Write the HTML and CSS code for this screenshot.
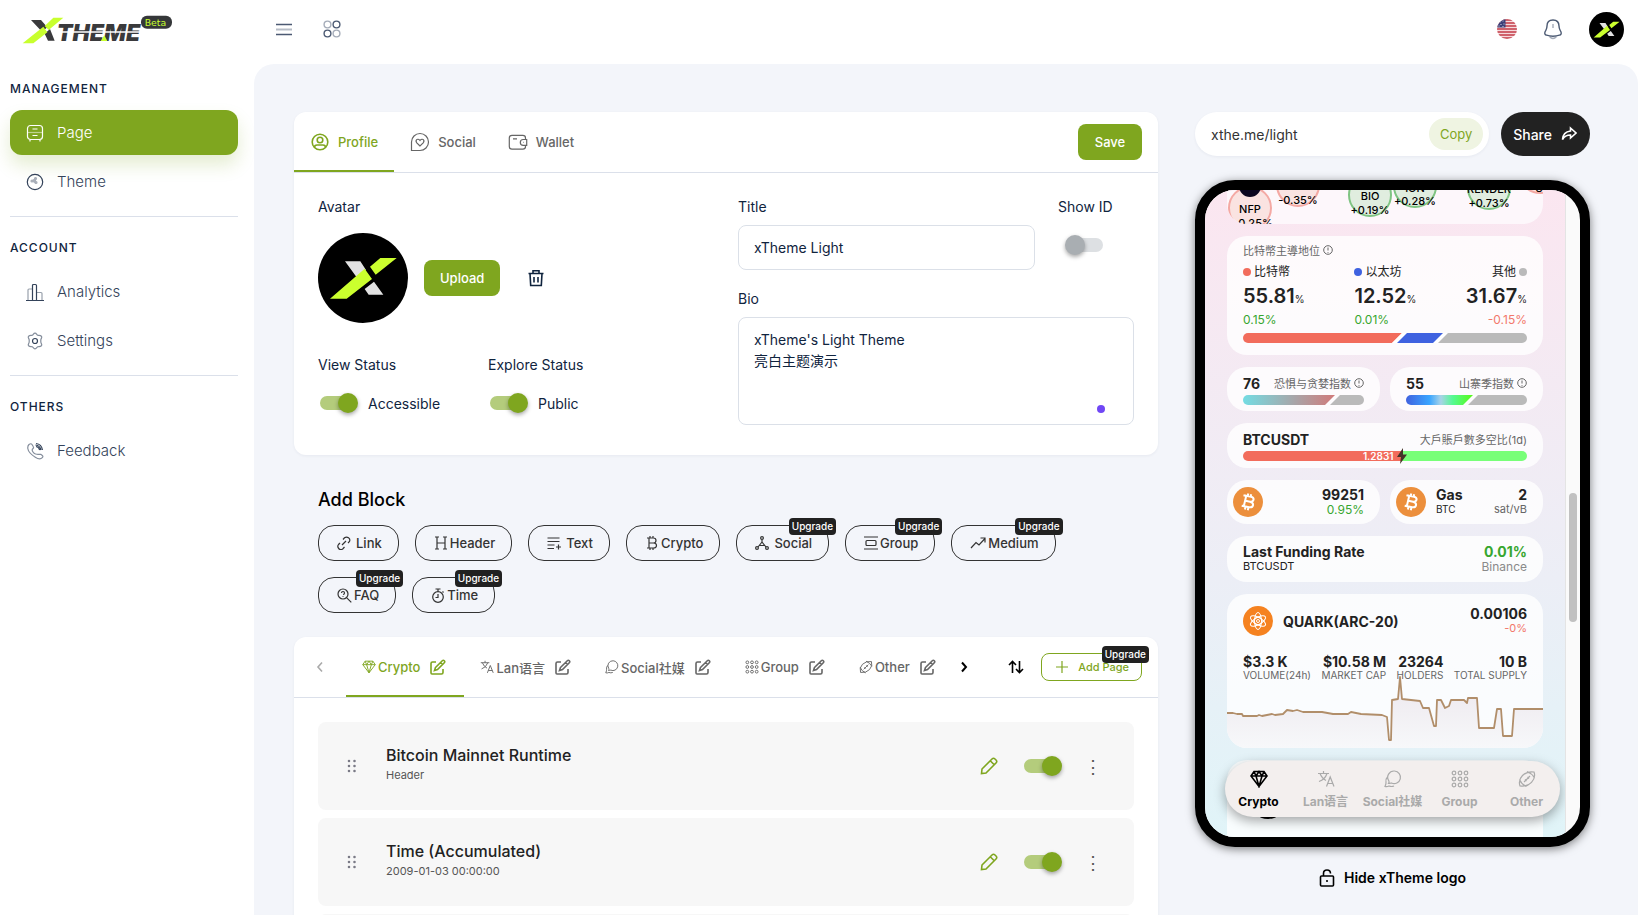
FILE: index.html
```html
<!DOCTYPE html>
<html lang="en">
<head>
	<meta charset="utf-8">
	<title>xTheme</title>
	<link rel="stylesheet" href="styles.css">
</head>
<body>
	<svg class="sprite" aria-hidden="true">
		<symbol id="xlogo" viewBox="84 399 270 270">
			<circle cx="219" cy="534" r="135" fill="#000"/>
			<path d="M165 484h46l17 26-27 23zM224 567l28-22 28 39h-44z" fill="#e2e2e2"/>
			<path d="M120 596l104-90 22 31-76 59zM240 500l31-26h49l-63 50z" fill="#cbff2e"/>
		</symbol>
		<symbol id="edit" viewBox="0 0 16 16">
			<path d="M6 3H2.500Q1 3 1 4.500V14q0 1 1 1h9.500q1.500 0 1.500-1.500V10M5.500 8.500l6.800-6.800q1-1 2 0t0 2L7.500 10.500l-3 1zM10.500 3.500l2 2"/>
		</symbol>
		<symbol id="diamond" viewBox="0 0 18 18">
			<path d="M4 1.500h10l3 4.500-8 10.500L1 6zM1 6h16M4 1.500L6 6l3 10.500L12 6l2-4.500M6 6l3-4.500L12 6"/>
		</symbol>
		<symbol id="lang" viewBox="0 0 18 18">
			<path d="M1 3.500h11M6.500 1v2.500M3 3.500q2 5 6 7M10 3.500q-2 6-8 8M9.500 16.500l3.700-9.500L17 16.500M10.800 13.500h5"/>
		</symbol>
		<symbol id="chat" viewBox="0 0 18 18">
			<path d="M10.500 1a6.300 6.300 0 1 1-3 12Q5 13.500 4.500 13.500q1-1.500.3-2.700A6.300 6.300 0 0 1 10.500 1zM3.500 7q-2 2-1.500 5 .3 1.500-1 4.500 2 .5 4-.5 2.500 1 5 0"/>
		</symbol>
		<symbol id="dots" viewBox="0 0 18 18">
			<g id="dotrow"><circle cx="3" cy="3" r="1.800"/><circle cx="9" cy="3" r="1.800"/><circle cx="15" cy="3" r="1.800"/></g>
			<use href="#dotrow" y="6"/><use href="#dotrow" y="12"/>
		</symbol>
		<symbol id="ball" viewBox="0 0 18 18">
			<path d="M2 16Q0 10 4.500 5.500T16 2q2 5.500-2.500 10.300T2 16zM9 1.500q5 2 7.500 6.500M1.500 9.500q2 5 7 7M6 12l6-6M7 9.500L8.500 11M9.500 7L11 8.500"/>
		</symbol>
		<symbol id="pencil" viewBox="0 0 18 18">
			<path d="M2 12L12 2q1.500-1.500 3 0l1 1q1.500 1.500 0 3L6 16l-4.500.5zM10.500 4l3.500 3.500"/>
		</symbol>
		<symbol id="drag" viewBox="0 0 10 14">
			<path d="M2 2h0M7.500 2h0M2 7h0M7.500 7h0M2 12h0M7.500 12h0"/>
		</symbol>
		<symbol id="info" viewBox="0 0 10 10">
			<circle cx="5" cy="5" r="4.300"/><path d="M5 2.500v3M5 7v.8"/>
		</symbol>
		<symbol id="bitcoin" viewBox="0 0 30 30">
			<circle cx="15" cy="15" r="15" fill="#ec8f3c"/>
			<path d="M12 8.500l6 1.200q3 .8 2.500 3t-3.500 2l-4.500-1M17 14.700q3.500 1 3 3.500t-4 2l-6.500-1.400M13.200 9l-2.400 10.300M10.500 8.200l2 .5M8.700 18.700l2.300.5M15.300 6.500l-.7 3M18.200 7.200l-.7 3M12.600 19.500l-.7 3M15.500 20.200l-.7 3" fill="none" stroke="#fff" stroke-width="2"/>
		</symbol>
	</svg>

	<aside class="sidebar">
		<a class="logo" href="#" aria-label="xTheme">
			<svg viewBox="66 46 456 87" width="152" height="29">
				<path d="M93 61h30l19 22-16 13zM134 102l16-14 14 35h-20z" fill="#3a3a3c"/>
				<path d="M68 131l62-50 12 17-42 33zM134 79l26-25h30l-44 37z" fill="#c8ff2e"/>
				<text x="170" y="125" class="logo-text">THEME</text>
				<path d="M176 97h244" stroke="#fff" stroke-width="4"/>
				<path d="M313 107l9 17h-20z" fill="#c8ff2e"/>
				<rect x="423" y="48" width="93" height="39" rx="18" fill="#353739"/>
				<text x="434" y="78" class="beta-text">Beta</text>
			</svg>
		</a>
		<nav>
			<h2>MANAGEMENT</h2>
			<a class="nav-item active" href="#">
				<svg class="icon" width="18" height="18" viewBox="0 0 18 18"><rect x="1.500" y="1.500" width="15" height="14" rx="3"/><path d="M6.500 5h5M6.500 11.500h5M4 16v1.500M14 16v1.500"/><path d="M1.500 8.500h15" opacity=".5"/></svg>
				Page
			</a>
			<a class="nav-item" href="#">
				<svg class="icon" width="18" height="18" viewBox="0 0 18 18"><circle cx="9" cy="9" r="7.700"/><g fill="#a9afb9" stroke="#a9afb9"><circle cx="6" cy="8" r="1"/><circle cx="9.500" cy="5.500" r="1"/><circle cx="10" cy="9.500" r="1"/><path d="M6 8l3.500-2.500V9.500z"/></g></svg>
				Theme
			</a>
			<hr>
			<h2>ACCOUNT</h2>
			<a class="nav-item" href="#">
				<svg class="icon" width="18" height="18" viewBox="0 0 18 18"><path d="M0 17.500h18M6.500 17V2.500q0-1 1-1h2q1 0 1 1V17"/><path d="M2 17V7q0-1 1-1h3M11 9.500h4q1 0 1 1V17" opacity=".5"/></svg>
				Analytics
			</a>
			<a class="nav-item" href="#">
				<svg class="icon" width="18" height="18" viewBox="0 0 18 18"><circle cx="9" cy="9" r="2.500"/><path opacity=".6" d="M9 1.200c1.500 0 1.700 1.500 2.700 2s2.400-.2 3.700 1-.6 2.300-.6 3.800v2c0 1.500 1.900 2.600.6 3.800s-2.700.5-3.700 1-1.200 2-2.700 2-1.700-1.500-2.700-2-2.400.2-3.700-1 .6-2.300.6-3.800V8c0-1.500-1.900-2.600-.6-3.800s2.700-.5 3.700-1 1.200-2 2.700-2z"/></svg>
				Settings
			</a>
			<hr>
			<h2>OTHERS</h2>
			<a class="nav-item" href="#">
				<svg class="icon" width="18" height="18" viewBox="0 0 18 18"><path opacity=".6" d="M3 2.500q2-1.500 3 0l1.200 2q.8 1.200-.4 2.300t0 3 2.700 2.200 2.500.3 2.800 0l1.500 1.200q1.200 1 0 2.200-2.500 2.500-7-.5Q2.500 11 1.800 6.500 1.500 4 3 2.500z"/><path d="M10 1.500q5.500.5 6.500 6.500M10 4.500q3 .5 3.700 3.500M9.500 3q4.500.5 5.500 5"/></svg>
				Feedback
			</a>
		</nav>
	</aside>

	<div class="page">
		<header class="topbar">
			<button class="icon-button" aria-label="Toggle menu">
				<svg width="18" height="18" viewBox="0 0 18 18" fill="none" stroke="#4c5a73"><path d="M1 4.500h16M1 14.500h16" stroke-width="1.300"/><path d="M1 9.500h16" opacity=".4" stroke-width="2"/></svg>
			</button>
			<button class="icon-button" aria-label="Apps">
				<svg width="18" height="18" viewBox="0 0 18 18" fill="none" stroke="#4c5a73" stroke-width="1.400"><circle cx="4.500" cy="4.500" r="3.400" opacity=".5"/><circle cx="13.500" cy="4.500" r="3.400"/><circle cx="4.500" cy="13.500" r="3.400"/><circle cx="13.500" cy="13.500" r="3.400" opacity=".5"/></svg>
			</button>
			<div class="topbar-right">
				<button class="icon-button" aria-label="Language">
					<svg width="20" height="20" viewBox="0 0 20 20">
						<clipPath id="round"><circle cx="10" cy="10" r="10"/></clipPath>
						<g clip-path="url(#round)"><path fill="#f6d9dc" d="M0 0h20v20H0z"/><path stroke="#c23a45" stroke-width="1.400" d="M0 1h20M0 4h20M0 7h20M0 10h20M0 13h20M0 16h20M0 19h20"/><path fill="#3c3f78" d="M0 0h8.500v8.500H0z"/><path d="M3 3h0M6 2h0M4 5.500h0M7 5h0M2 7h0M6 7.500h0" stroke="#fff" stroke-linecap="round"/></g>
					</svg>
				</button>
				<button class="icon-button" aria-label="Notifications">
					<svg width="20" height="22" viewBox="0 0 20 22" fill="none" stroke="#4c5a73" stroke-width="1.400"><path d="M10 2C6 2 4 4.500 4 8c0 3-.8 3.500-2 6-.7 1.700.2 2.800 1.500 3.200 4 1.200 9 1.200 13 0 1.300-.4 2.200-1.500 1.500-3.200-1.200-2.500-2-3-2-6 0-3.500-2-6-6-6z"/><path d="M10 6v4M6.500 18.500q3.500 4 7 0" opacity=".5"/></svg>
				</button>
				<button class="icon-button" aria-label="Account"><svg width="35" height="35"><use href="#xlogo"/></svg></button>
			</div>
		</header>

		<main class="content">
			<div class="editor">
				<section class="card">
					<div class="tabs">
						<button class="tab active"><svg class="icon thick" width="20" height="20" viewBox="0 0 20 20"><circle cx="10" cy="10" r="7.800"/><circle cx="10" cy="8" r="2.800"/><path d="M4.500 15.500q0-2.500 2.500-2.500h6q2.500 0 2.500 2.500"/></svg>Profile</button>
						<button class="tab"><svg class="icon" width="20" height="20" viewBox="0 0 20 20"><path d="M1.500 18.500V10A8.500 8.500 0 1 1 10 18.500zM10 14l-3.200-3.200q-1.500-2 0-3.200 1.700-1 3.200.9 1.500-1.900 3.200-.9 1.500 1.200 0 3.200z"/></svg>Social</button>
						<button class="tab"><svg class="icon" width="20" height="20" viewBox="0 0 20 20"><path d="M17.500 7V6q0-2.700-2.700-2.700H4Q1.300 3.300 1.300 6v8.500q0 2.700 2.700 2.700h10.800q2.700 0 2.700-2.700V13.500M5 6.800h4M18.700 7.500h-3.500a2.900 2.900 0 0 0 0 5.800h3.500zM15 10.300h.5"/></svg>Wallet</button>
						<button class="btn save">Save</button>
					</div>
					<form class="profile">
						<div class="profile-left">
							<span class="label">Avatar</span>
							<div class="avatar-row">
								<svg width="90" height="90"><use href="#xlogo"/></svg>
								<button type="button" class="btn upload">Upload</button>
								<button type="button" class="icon-button" aria-label="Delete avatar">
									<svg class="icon thick" width="18" height="18" viewBox="0 0 18 18"><path d="M1.500 4.500h15M6 4V1.700h6V4M3 4.500l.7 12h10.600l.7-12M7 8v5.500M11 8v5.500"/></svg>
								</button>
							</div>
							<div class="status-row">
								<div>
									<span class="label">View Status</span>
									<label class="toggle"><input type="checkbox" class="switch" checked>Accessible</label>
								</div>
								<div>
									<span class="label">Explore Status</span>
									<label class="toggle"><input type="checkbox" class="switch" checked>Public</label>
								</div>
							</div>
						</div>
						<div class="profile-right">
							<div class="title-row">
								<div class="title-field">
									<label class="label" for="title">Title</label>
									<input type="text" id="title" class="field" value="xTheme Light">
								</div>
								<div class="show-id">
									<label class="label" for="showid">Show ID</label>
									<input type="checkbox" class="switch" id="showid">
								</div>
							</div>
							<label class="label" for="bio">Bio</label>
							<div class="bio">
								<textarea id="bio" class="field">xTheme's Light Theme
亮白主题演示</textarea>
								<span class="bio-dot"></span>
							</div>
						</div>
					</form>
				</section>

				<section class="blocks">
					<h3>Add Block</h3>
					<div class="block-list">
						<button class="block wide"><svg class="icon" width="14" height="14" viewBox="0 0 14 14"><path d="M6 3.500l1.500-1.700q2-1.500 4 0t1 3.700L11 7M3 7L1.500 8.500q-1.500 2 .2 4t4 .5L7.500 11M5 9l4-4"/></svg>Link</button>
						<button class="block"><svg class="icon" width="14" height="14" viewBox="0 0 14 14"><path d="M1 1h4M3 1v12M1 13h4M9 1h4M11 1v12M9 13h4M3 7h8"/></svg>Header</button>
						<button class="block wide"><svg class="icon" width="14" height="14" viewBox="0 0 14 14"><path d="M.5 2h12M.5 5.500h12M.5 9h7M.5 12.500H7M11.500 8.500v5M9 11h5"/></svg>Text</button>
						<button class="block"><svg class="icon" width="14" height="14" viewBox="0 0 14 14"><path d="M2 2h6.500q2.500 0 2.500 2.500T8.500 7H4M8.500 7Q11.500 7 11.500 9.500T8.500 12H2M4 2v10M5 0v2M8 0v2M5 12v2M8 12v2"/></svg>Crypto</button>
						<button class="block wide"><svg class="icon" width="14" height="14" viewBox="0 0 14 14"><circle cx="7" cy="2" r="1.400"/><circle cx="2" cy="12" r="1.400"/><circle cx="12" cy="12" r="1.400"/><path d="M7 3.500v3M7 6L3 11M7 6l4 5M4.500 9.500h5"/></svg>Social<span class="badge">Upgrade</span></button>
						<button class="block"><svg class="icon" width="14" height="14" viewBox="0 0 14 14"><path d="M0 1h14M0 13h14"/><rect x="2" y="4.500" width="10" height="5" rx="1"/></svg>Group<span class="badge">Upgrade</span></button>
						<button class="block"><svg class="icon" width="16" height="14" viewBox="0 0 16 14"><path d="M1 12l5-5.500L9 9l6-6.500M10.500 2H15v4.500"/></svg>Medium<span class="badge">Upgrade</span></button>
						<button class="block"><svg class="icon" width="15" height="15" viewBox="0 0 15 15"><circle cx="6" cy="6" r="5"/><path d="M9.800 9.800l4.500 4.500M4.500 5q0-1.500 1.500-1.500T7.500 5 6 6.500M6 8v.8"/></svg>FAQ<span class="badge">Upgrade</span></button>
						<button class="block"><svg class="icon" width="14" height="15" viewBox="0 0 14 15"><circle cx="7" cy="9" r="5.300"/><path d="M4.500 1h5M7 1v2.500M11.500 3.500l1 1M7 6v3.500H4.500"/></svg>Time<span class="badge">Upgrade</span></button>
					</div>
				</section>

				<section class="card">
					<div class="tabs pages">
						<button class="arrow" aria-label="Previous" disabled><svg class="icon thick" width="12" height="12" viewBox="0 0 12 12"><path d="M8 1.500L4 6l4 4.500"/></svg></button>
						<button class="tab active"><svg class="icon" width="14" height="14"><use href="#diamond"/></svg>Crypto<svg class="icon edit" width="16" height="16"><use href="#edit"/></svg></button>
						<button class="tab"><svg class="icon" width="14" height="14"><use href="#lang"/></svg>Lan语言<svg class="icon edit" width="16" height="16"><use href="#edit"/></svg></button>
						<button class="tab"><svg class="icon" width="14" height="14"><use href="#chat"/></svg>Social社媒<svg class="icon edit" width="16" height="16"><use href="#edit"/></svg></button>
						<button class="tab"><svg class="icon" width="14" height="14"><use href="#dots"/></svg>Group<svg class="icon edit" width="16" height="16"><use href="#edit"/></svg></button>
						<button class="tab"><svg class="icon" width="14" height="14"><use href="#ball"/></svg>Other<svg class="icon edit" width="16" height="16"><use href="#edit"/></svg></button>
						<button class="arrow next-arrow" aria-label="Next"><svg class="icon bold" width="12" height="12" viewBox="0 0 12 12"><path d="M4 1.500L8 6l-4 4.500"/></svg></button>
						<button class="arrow sort" aria-label="Sort"><svg class="icon thick" width="16" height="14" viewBox="0 0 16 14"><path d="M4.500 13V1.500M1 5l3.500-3.500L8 5M11.500 1v11.500M8 9l3.500 3.500L15 9"/></svg></button>
						<button class="add-page"><svg class="icon" width="12" height="12" viewBox="0 0 12 12"><path d="M6 0v12M0 6h12"/></svg>Add Page<span class="badge">Upgrade</span></button>
					</div>
					<ul class="rows">
						<li class="row">
							<button class="icon-button drag" aria-label="Move"><svg width="10" height="14"><use href="#drag"/></svg></button>
							<div class="row-text"><strong>Bitcoin Mainnet Runtime</strong><span>Header</span></div>
							<button class="icon-button pencil" aria-label="Edit"><svg class="icon thick" width="18" height="18"><use href="#pencil"/></svg></button>
							<input type="checkbox" class="switch" checked aria-label="Show block">
							<button class="icon-button more" aria-label="More">⋮</button>
						</li>
						<li class="row">
							<button class="icon-button drag" aria-label="Move"><svg width="10" height="14"><use href="#drag"/></svg></button>
							<div class="row-text"><strong>Time (Accumulated)</strong><span>2009-01-03 00:00:00</span></div>
							<button class="icon-button pencil" aria-label="Edit"><svg class="icon thick" width="18" height="18"><use href="#pencil"/></svg></button>
							<input type="checkbox" class="switch" checked aria-label="Show block">
							<button class="icon-button more" aria-label="More">⋮</button>
						</li>
						<li class="row"></li>
					</ul>
				</section>
			</div>

			<div class="preview">
				<div class="share-row">
					<div class="url-box">
						<input type="text" value="xthe.me/light" aria-label="Page address" readonly>
						<button class="copy">Copy</button>
					</div>
					<button class="share">Share <svg class="icon thick" width="16" height="16" viewBox="0 0 16 16"><path d="M9.500 2l5.500 5-5.500 5V9Q4 9 1.500 13.500 2 6 9.500 5z"/></svg></button>
				</div>

				<div class="phone">
					<div class="screen">
						<svg class="bubbles" viewBox="0 0 316 34">
							<g class="down"><circle cx="23" cy="18" r="21"/><circle cx="71" cy="-5" r="21"/><circle cx="313" cy="-18" r="21"/></g>
							<g class="up"><circle cx="143" cy="5" r="21"/><circle cx="188" cy="-4" r="21"/><circle cx="262" cy="-2" r="21"/></g>
							<circle cx="23" cy="-4" r="11" fill="#0b0720"/>
							<text x="23" y="23">NFP</text><text x="26" y="37">-0.25%</text>
							<text x="71" y="14">-0.35%</text>
							<text x="143" y="10">BIO</text><text x="143" y="24">+0.19%</text>
							<text x="188" y="2">ION</text><text x="188" y="15">+0.28%</text>
							<text x="262" y="3">RENDER</text><text x="262" y="17">+0.73%</text>
							<text x="312" y="2">S</text>
						</svg>

						<div class="widget dominance">
							<p class="muted">比特幣主導地位 <svg class="icon" width="10" height="10"><use href="#info"/></svg></p>
							<div class="coins">
								<div>
									<p class="coin"><i class="dot red"></i>比特幣</p>
									<p class="value">55.81<small>%</small></p>
									<p class="green">0.15%</p>
								</div>
								<div>
									<p class="coin"><i class="dot blue"></i>以太坊</p>
									<p class="value">12.52<small>%</small></p>
									<p class="green">0.01%</p>
								</div>
								<div class="right">
									<p class="coin">其他<i class="dot gray"></i></p>
									<p class="value">31.67<small>%</small></p>
									<p class="pink">-0.15%</p>
								</div>
							</div>
							<svg class="bar" viewBox="0 0 284 10"><path fill="#f26c5c" d="M0 0h159l-10 10H0z"/><path fill="#fff" d="M159 0h46l-10 10h-46z"/><path fill="#3f62e0" d="M164 0h36l-10 10h-36z"/><path fill="#bababa" d="M205 0h79v10h-89z"/></svg>
						</div>

						<div class="pair">
							<div class="widget index">
								<p><b>76</b><span class="muted">恐惧与贪婪指数 <svg class="icon" width="10" height="10"><use href="#info"/></svg></span></p>
								<svg class="bar" viewBox="0 0 121 10"><linearGradient id="fear"><stop stop-color="#74dce3"/><stop offset="1" stop-color="#d17a7a"/></linearGradient><path fill="url(#fear)" d="M0 0h92l-10 10H0z"/><path fill="#bababa" d="M97 0h24v10H87z"/></svg>
							</div>
							<div class="widget index">
								<p><b>55</b><span class="muted">山寨季指数 <svg class="icon" width="10" height="10"><use href="#info"/></svg></span></p>
								<svg class="bar" viewBox="0 0 121 10"><linearGradient id="alt"><stop stop-color="#4062df"/><stop offset=".35" stop-color="#3aa5ff"/><stop offset=".52" stop-color="#a8d3e8"/><stop offset=".7" stop-color="#55f991"/><stop offset="1" stop-color="#57fb13"/></linearGradient><path fill="url(#alt)" d="M0 0h67l-10 10H0z"/><path fill="#bababa" d="M72 0h49v10H62z"/></svg>
							</div>
						</div>

						<div class="widget index">
							<p><b>BTCUSDT</b><span class="muted">大戶賬戶數多空比(1d)</span></p>
							<div class="ratio"><span>1.2831</span><svg width="12" height="16" viewBox="0 0 12 16"><path d="M7 0L1 9h4l-1 7 7-9.500H7z" fill="#453428"/></svg></div>
						</div>

						<div class="pair">
							<div class="widget price">
								<svg width="30" height="30"><use href="#bitcoin"/></svg>
								<div class="right"><b>99251</b><span class="green">0.95%</span></div>
							</div>
							<div class="widget price">
								<svg width="30" height="30"><use href="#bitcoin"/></svg>
								<div><b>Gas</b><span class="tiny">BTC</span></div>
								<div class="right"><b>2</b><span class="muted">sat/vB</span></div>
							</div>
						</div>

						<div class="widget price funding">
							<div><b>Last Funding Rate</b><span class="pair-name">BTCUSDT</span></div>
							<div class="right"><b class="green">0.01%</b><span class="pale">Binance</span></div>
						</div>

						<div class="widget token">
							<div class="token-head">
								<svg width="30" height="30" viewBox="0 0 30 30"><circle cx="15" cy="15" r="15" fill="#f58220"/><g fill="none" stroke="#fff"><ellipse cx="15" cy="15" rx="3.500" ry="8.500"/><ellipse cx="15" cy="15" rx="3.500" ry="8.500" transform="rotate(60 15 15)"/><ellipse cx="15" cy="15" rx="3.500" ry="8.500" transform="rotate(-60 15 15)"/><circle cx="15" cy="15" r="4"/><circle cx="15" cy="15" r="1.500"/></g></svg>
								<b>QUARK(ARC-20)</b>
								<div class="right"><b>0.00106</b><span class="pink">-0%</span></div>
							</div>
							<div class="stats">
								<div><b>$3.3 K</b><span>VOLUME(24h)</span></div>
								<div class="right"><b>$10.58 M</b><span>MARKET CAP</span></div>
								<div class="right"><b>23264</b><span>HOLDERS</span></div>
								<div class="right"><b>10 B</b><span>TOTAL SUPPLY</span></div>
							</div>
							<svg class="chart" viewBox="0 0 316 72">
								<linearGradient id="area" x2="0" y2="1"><stop stop-color="#ece7ed"/><stop offset="1" stop-color="#f7f8fa"/></linearGradient>
								<path fill="url(#area)" d="M0 37L10 38 16 40 30 39 45 38 56 38 60 34 76 36 95 36 106 38 155 39 160 41 162 64 164 64 165 24 171 23 173 1 175 23 193 25 196 32 202 32 207 50 209 50 210 24 214 24 218 32 222 30 224 24 237 24 240 27 241 22 250 22 252 52 267 52 270 33 274 33 276 60 285 60 287 33 316 33V72H0z"/>
								<path fill="none" stroke="#b18e6a" stroke-width="1.800" stroke-linejoin="round" d="M0 37h6l4 1h5l1 2h14l2-1 3 1 10-2 3 1 8-1 4-4 6 1 4-1 6 2h19l11 2h15l3-2 10 2 21 1 5 2 2 23h2l1-40 6-1 2-22 2 22 18 2 3 7h6l5 18h2l1-26h4l4 8 4-2 2-6h13l3 3 1-5h9l2 30h15l3-19h4l2 27h9l2-27h29"/>
							</svg>
						</div>

						<div class="widget next"><span></span></div>

						<nav class="dock">
							<a class="active" href="#"><svg class="icon thick" width="18" height="18"><use href="#diamond"/></svg>Crypto</a>
							<a href="#"><svg class="icon" width="18" height="18"><use href="#lang"/></svg>Lan语言</a>
							<a href="#"><svg class="icon" width="18" height="18"><use href="#chat"/></svg>Social社媒</a>
							<a href="#"><svg class="icon" width="18" height="18"><use href="#dots"/></svg>Group</a>
							<a href="#"><svg class="icon" width="18" height="18"><use href="#ball"/></svg>Other</a>
						</nav>
					</div>
					<div class="scrollbar"><span></span></div>
				</div>

				<button class="hide-logo">
					<svg class="icon thick" width="16" height="18" viewBox="0 0 16 18"><rect x="1.500" y="7" width="13" height="10" rx="1"/><path d="M4.500 7V4.500Q4.500 1 8 1t3.500 3.500M8 11v2"/></svg>
					Hide xTheme logo
				</button>
			</div>
		</main>
	</div>
</body>
</html>
```
FILE: styles.css
```css
*{
	box-sizing: border-box;
}
body{
	margin: 0;
	height: 100vh;
	display: flex;
	overflow: hidden;
	background-color: #fff;
	color: #10243e;
	font-family: Inter, "Noto Sans CJK SC", sans-serif;
	font-size: 14px;
}
button, input, textarea{
	font-family: inherit;
	color: inherit;
}
button{
	border: none;
	background: none;
	padding: 0;
	cursor: pointer;
	position: relative;
	white-space: nowrap;
}
h2, h3, p, ul{
	margin: 0;
	padding: 0;
}
a{
	color: inherit;
	text-decoration: none;
}
svg{
	display: block;
	flex-shrink: 0;
}
.sprite{
	position: absolute;
	width: 0;
	height: 0;
}
.icon{
	fill: none;
	stroke: currentColor;
	stroke-width: 1.2px;
}
.thick{
	stroke-width: 1.6px;
}
.bold{
	stroke-width: 2px;
}
.icon-button{
	display: flex;
	align-items: center;
	justify-content: center;
}

/* sidebar */
.sidebar{
	width: 254px;
	flex-shrink: 0;
	padding: 15px 16px 0 10px;
}
.logo{
	display: block;
	padding-left: 12px;
	margin-bottom: 36px;
}
.logo-text{
	font-size: 69px;
	font-weight: 900;
	font-style: italic;
	fill: #3a3a3c;
}
.beta-text{
	font-family: "DejaVu Sans", sans-serif;
	font-size: 28px;
	fill: #c8ff2e;
}
.sidebar h2{
	font-size: 12px;
	line-height: 18px;
	font-weight: 500;
	letter-spacing: 1px;
	margin-bottom: 12px;
}
.sidebar hr{
	border: none;
	border-top: 1px solid #dbe0ea;
	margin: 12px 0 22px;
}
.nav-item{
	display: flex;
	align-items: center;
	gap: 13px;
	height: 45px;
	margin-bottom: 4px;
	padding-left: 16px;
	border-radius: 12px;
	font-size: 15px;
	font-weight: 300;
	color: #34435a;
}
.nav-item.active{
	background-color: #7fa61f;
	color: #fff;
	box-shadow: 0 10px 18px rgba(127, 166, 31, 0.2);
}

/* top bar */
.page{
	flex: 1;
	display: flex;
	flex-direction: column;
	min-width: 0;
	padding-right: 14px;
}
.topbar{
	display: flex;
	align-items: center;
	gap: 30px;
	height: 64px;
	flex-shrink: 0;
	padding: 0 14px 6px 21px;
}
.topbar-right{
	display: flex;
	align-items: center;
	gap: 26px;
	margin-left: auto;
}
.content{
	flex: 1;
	display: grid;
	grid-template-columns: minmax(0, 2fr) minmax(0, 1fr);
	padding: 48px 48px 0 40px;
	min-height: 0;
	overflow: hidden;
	background-color: #f3f5fa;
	border-radius: 20px 20px 0 0;
}

/* cards and tabs */
.card{
	background-color: #fff;
	border-radius: 12px;
	box-shadow: 0 1px 3px rgba(30, 50, 90, 0.06);
}
.tabs{
	display: flex;
	align-items: center;
	height: 61px;
	border-bottom: 1px solid #dbe0ea;
	padding-right: 16px;
}
.tab{
	display: flex;
	align-items: center;
	gap: 8px;
	height: 60px;
	padding: 2px 16px 0;
	font-size: 13px;
	font-weight: 500;
	color: #666;
	border-bottom: 2px solid transparent;
}
.tab.active{
	color: #7fa61f;
	border-bottom-color: #7fa61f;
}
.btn{
	height: 36px;
	padding: 0 16px;
	border-radius: 8px;
	background-color: #7fa61f;
	color: #fff;
	font-size: 13px;
	font-weight: 500;
}
.save{
	min-width: 64px;
	margin-left: auto;
}
.profile{
	display: flex;
	padding: 24px 24px 30px;
}
.profile-left{
	width: 420px;
}
.profile-right{
	flex: 1;
}
.label{
	display: block;
	line-height: 20px;
}
.avatar-row{
	display: flex;
	align-items: center;
	gap: 16px;
	margin: 16px 0 32px;
}
.avatar-row .icon-button{
	margin-left: 11px;
}
.status-row{
	display: grid;
	grid-template-columns: 170px 170px;
}
.toggle{
	display: flex;
	align-items: center;
	gap: 10px;
	margin-top: 18px;
	padding-left: 2px;
}
.switch{
	appearance: none;
	position: relative;
	width: 38px;
	height: 20px;
	margin: 0;
	flex-shrink: 0;
}
.switch::before{
	content: "";
	position: absolute;
	inset: 3px 0 3px 2px;
	border-radius: 7px;
	background-color: #dde0e3;
}
.switch::after{
	content: "";
	position: absolute;
	left: 0;
	width: 20px;
	height: 20px;
	border-radius: 50%;
	background-color: #a9aeb2;
	box-shadow: 0 2px 4px rgba(0, 0, 0, 0.35);
}
.switch:checked::before{
	inset: 3px 2px 3px 0;
	background-color: #b4cc7c;
}
.switch:checked::after{
	left: 18px;
	background-color: #7fa61f;
}
.title-row{
	display: flex;
	gap: 23px;
	margin-bottom: 19px;
}
.title-field{
	flex: 1;
}
.show-id{
	width: 76px;
}
.show-id .switch{
	margin: 18px 0 0 7px;
}
.field{
	display: block;
	width: 100%;
	height: 45px;
	margin-top: 8px;
	padding: 0 15px;
	border: 1px solid #dbe0e8;
	border-radius: 8px;
	font-size: 14px;
	background-color: #fff;
}
.bio{
	position: relative;
}
textarea.field{
	height: 108px;
	padding: 11px 15px;
	line-height: 21px;
	resize: none;
}
.bio-dot{
	position: absolute;
	right: 29px;
	bottom: 12px;
	width: 8px;
	height: 8px;
	border-radius: 50%;
	background-color: #7047f5;
}

/* add block */
.blocks{
	padding: 33px 24px 24px;
}
.blocks h3{
	font-size: 18px;
	line-height: 24px;
	font-weight: 500;
	color: #000;
	margin-bottom: 13px;
}
.block-list{
	display: flex;
	flex-wrap: wrap;
	gap: 16px;
}
.block{
	display: flex;
	align-items: center;
	gap: 2px;
	height: 36px;
	padding: 0 16px 0 18px;
	border: 1px solid #333;
	border-radius: 16px;
	font-size: 13px;
	font-weight: 500;
	color: #333;
}
.block.wide{
	gap: 5px;
}
.badge{
	position: absolute;
	top: -8px;
	right: -8px;
	padding: 0 3px;
	border-radius: 4px;
	background-color: #212121;
	color: #fff;
	font-size: 10px;
	line-height: 17px;
	font-weight: 500;
}

/* page list */
.pages .tab{
	gap: 2px;
	padding-right: 18px;
}
.pages .edit{
	margin-left: 8px;
	stroke-width: 1.6px;
}
.arrow{
	display: flex;
	padding: 0 20px;
	color: #000;
}
.arrow:disabled{
	color: #aaa;
}
.next-arrow{
	padding: 0 4px;
}
.sort{
	margin-left: auto;
	padding: 0 17px 0 0;
}
.add-page{
	display: flex;
	align-items: center;
	gap: 10px;
	height: 28px;
	padding: 0 12px 0 14px;
	border: 1px solid #7fa61f;
	border-radius: 8px;
	font-size: 11px;
	font-weight: 500;
	color: #7fa61f;
}
.rows{
	display: flex;
	flex-direction: column;
	gap: 8px;
	padding: 24px;
	list-style: none;
}
.row{
	display: flex;
	align-items: center;
	height: 88px;
	padding: 0 34px 0 29px;
	border-radius: 8px;
	background-color: #f7f7f7;
}
.drag svg{
	stroke: #7a7a86;
	stroke-width: 2.6px;
	stroke-linecap: round;
}
.row-text{
	flex: 1;
	display: flex;
	flex-direction: column;
	margin-left: 29px;
	padding-bottom: 4px;
	color: #222;
}
.row-text strong{
	font-size: 16px;
	line-height: 22px;
	font-weight: 500;
}
.row-text span{
	font-size: 11px;
	line-height: 18px;
	color: #555;
}
.pencil{
	color: #7fa61f;
	margin-right: 26px;
}
.more{
	width: 14px;
	margin-left: 24px;
	font-size: 18px;
	color: #555;
}

/* preview */
.preview{
	padding-left: 37px;
}
.share-row{
	display: flex;
	gap: 12px;
	margin-bottom: 24px;
}
.url-box{
	flex: 1;
	display: flex;
	align-items: center;
	height: 44px;
	min-width: 0;
	padding: 0 6px 0 16px;
	border-radius: 22px;
	background-color: #fff;
	box-shadow: 0 1px 3px rgba(30, 50, 90, 0.06);
}
.url-box input{
	flex: 1;
	min-width: 0;
	border: none;
	padding: 0;
	font-size: 14px;
	color: #333;
}
.copy{
	height: 32px;
	padding: 0 11px;
	border-radius: 16px;
	background-color: #eff4e2;
	color: #7fa61f;
	font-size: 13px;
}
.share{
	display: flex;
	align-items: center;
	gap: 9px;
	padding: 0 13px 0 12px;
	border-radius: 22px;
	background-color: #222;
	color: #fff;
	font-size: 14px;
	font-weight: 500;
}
.phone{
	display: flex;
	height: 667px;
	border: 10px solid #000;
	border-radius: 40px;
	overflow: hidden;
	background-color: #fafafa;
	box-shadow: 0 2px 10px rgba(0, 0, 0, 0.5);
}
.screen{
	position: relative;
	flex: 1;
	display: flex;
	flex-direction: column;
	gap: 12px;
	min-width: 0;
	padding: 0 22px;
	background: linear-gradient(#fbe6f0, #eceef6 60%, #e0f4f8);
	color: #222;
	overflow: hidden;
}
.screen > *{
	flex-shrink: 0;
}
.screen p, .screen b, .screen span{
	display: block;
}
.scrollbar{
	width: 15px;
	border-left: 1px solid #e4e4e4;
	padding: 303px 3px 0;
}
.scrollbar span{
	display: block;
	height: 129px;
	border-radius: 4px;
	background-color: #c1c1c1;
}
.bubbles{
	width: 100%;
	border-radius: 0 0 20px 20px;
	background-color: #fdf7fb;
}
.bubbles text{
	font-size: 11px;
	font-weight: 500;
	text-anchor: middle;
}
.bubbles .down{
	fill: #fae3e1;
	stroke: #f4a9a4;
	stroke-width: 2px;
}
.bubbles .up{
	fill: #e0eddf;
	stroke: #7fc482;
	stroke-width: 2px;
}
.widget{
	padding: 8px 16px;
	border-radius: 20px;
	background-color: rgba(255, 255, 255, 0.8);
}
.right{
	text-align: right;
}
.muted{
	color: #666;
	font-size: 11px;
}
.pale{
	color: #8a8a8a;
}
.green{
	color: #37a62f;
}
.pink{
	color: #f2786b;
}
.bar{
	width: 100%;
	border-radius: 5px;
}
.muted .icon{
	display: inline-block;
	stroke-width: 1px;
}
.dominance{
	height: 119px;
	font-size: 12px;
	line-height: 20px;
}
.dominance .muted{
	line-height: 14px;
}
.coins{
	display: flex;
	margin: 4px 0 3px;
}
.coins > div{
	width: 112px;
}
.coins > .right{
	flex: 1;
}
.coins p{
	line-height: 20px;
}
.dot{
	display: inline-block;
	width: 8px;
	height: 8px;
	border-radius: 50%;
	margin-right: 3px;
}
.right .dot{
	margin: 0 0 0 3px;
}
.red{
	background-color: #f26c5c;
}
.blue{
	background-color: #3f62e0;
}
.gray{
	background-color: #bababa;
}
.coins .value{
	font-size: 20px;
	line-height: 28px;
	font-weight: 600;
}
.value small{
	font-size: 10px;
	line-height: 10px;
	font-weight: 400;
}
.pair{
	display: grid;
	grid-template-columns: 1fr 1fr;
	gap: 10px;
}
.index p{
	display: flex;
	justify-content: space-between;
	align-items: center;
	height: 16px;
	white-space: nowrap;
	margin-bottom: 4px;
}
.screen b{
	font-size: 14px;
	font-weight: 700;
}
.index{
	padding-bottom: 6px;
}
.ratio{
	position: relative;
	height: 10px;
	margin-bottom: 1px;
	border-radius: 5px;
	background: linear-gradient(to right, #f26c5c 56%, #78ff78 56%);
}
.ratio span{
	width: 53%;
	text-align: right;
	color: #fff;
	font-size: 10px;
	line-height: 11px;
	font-weight: 600;
}
.ratio svg{
	position: absolute;
	left: 54%;
	top: -3px;
}
.price{
	display: flex;
	align-items: center;
	gap: 10px;
	height: 44px;
	padding: 0 16px 0 6px;
	font-size: 12px;
	line-height: 15px;
}
.price .right{
	margin-left: auto;
}
.price .tiny{
	font-size: 10px;
}
.pair-name{
	font-size: 11px;
}
.funding{
	height: 46px;
	padding: 0 16px;
}
.token{
	position: relative;
	height: 154px;
	padding: 12px 16px;
	overflow: hidden;
}
.token-head{
	display: flex;
	align-items: center;
	gap: 10px;
	font-size: 11px;
	line-height: 15px;
}
.token-head .right{
	margin-left: auto;
}
.stats{
	display: flex;
	justify-content: space-between;
	margin-top: 18px;
	line-height: 15px;
}
.stats span{
	font-size: 10px;
	line-height: 13px;
	color: #666;
}
.chart{
	position: absolute;
	left: 0;
	bottom: 0;
	width: 100%;
}
.next{
	height: 100px;
	padding: 23px;
}
.next span{
	width: 36px;
	height: 36px;
	border-radius: 50%;
	background-color: #000;
}
.dock{
	position: absolute;
	left: 20px;
	right: 5px;
	bottom: 20px;
	display: grid;
	grid-template-columns: repeat(5, 1fr);
	height: 56px;
	padding-top: 2px;
	border-radius: 28px;
	background-color: #f3efee;
	box-shadow: 0 4px 12px rgba(0, 0, 0, 0.35);
}
.dock a{
	display: flex;
	flex-direction: column;
	align-items: center;
	justify-content: center;
	gap: 6px;
	font-size: 12px;
	line-height: 16px;
	font-weight: 700;
	white-space: nowrap;
	color: #aaa;
}
.dock .active{
	color: #000;
}
.hide-logo{
	display: flex;
	align-items: center;
	gap: 9px;
	margin: 21px auto 0;
	font-size: 14px;
	line-height: 20px;
	font-weight: 600;
	color: #000;
}
```
